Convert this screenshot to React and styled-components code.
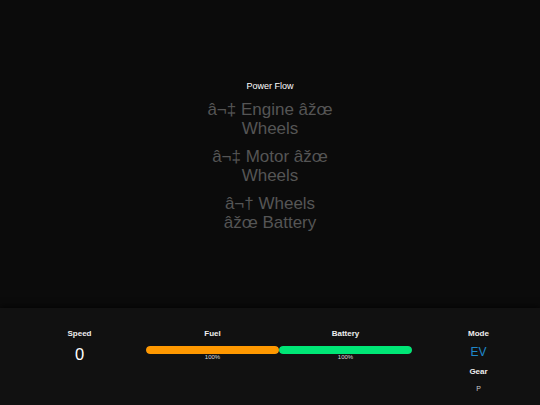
import React from 'react';
import styled, { createGlobalStyle } from 'styled-components';

const GlobalStyle = createGlobalStyle`
  html, body {
    margin: 0;
    padding: 0;
    background: #0b0b0b;
  }
  body {
    font-family: "Liberation Sans", Arial, sans-serif;
  }
`;

const Screen = styled.div`
  width: 540px;
  height: 405px;
  display: flex;
  flex-direction: column;
  background: #0b0b0b;
  color: #fff;
  overflow: hidden;
`;

const FlowArea = styled.div`
  flex: 1;
  display: flex;
  flex-direction: column;
  align-items: center;
  justify-content: center;
  padding-top: 4px;
`;

const FlowTitle = styled.div`
  font-size: 9px;
  color: #fff;
  margin-bottom: 9px;
`;

const FlowList = styled.div`
  width: 127px;
  display: flex;
  flex-direction: column;
  gap: 9px;
`;

const FlowItem = styled.div`
  font-size: 17px;
  color: #555;
  text-align: center;
  line-height: 19px;
`;

const Dashboard = styled.div`
  height: 97px;
  box-sizing: border-box;
  background: #111;
  box-shadow: 0 -2px 6px rgba(0, 0, 0, 0.6);
  padding: 20px 0 0 13px;
  display: grid;
  grid-template-columns: repeat(4, 133px);
  align-items: start;
`;

const Gauge = styled.div`
  display: flex;
  flex-direction: column;
  align-items: center;
`;

const Label = styled.div`
  font-size: 8px;
  font-weight: bold;
  line-height: 9px;
  color: #eee;
  margin-bottom: ${p => p.$gap || 8}px;
  margin-top: 0.5px;
`;

const Speed = styled.div`
  font-size: 16.5px;
  line-height: 19px;
  margin-top: -0.5px;
`;

const Track = styled.div`
  width: 100%;
  height: 8px;
  border-radius: 4px;
  background: #333;
  overflow: hidden;
  margin-top: 0.5px;
`;

const Fill = styled.div`
  height: 100%;
  border-radius: 4px;
  background: ${p => p.$color};
`;

const Percent = styled.div`
  font-size: 6px;
  line-height: 7px;
  color: #ddd;
`;

const Mode = styled.div`
  font-size: 12px;
  line-height: 14px;
  color: #1f88cc;
  margin-top: -0.5px;
  margin-bottom: 7.5px;
`;

const GearValue = styled.div`
  font-size: 7px;
  line-height: 8px;
  color: #ccc;
  margin-top: 0.5px;
`;

const levels = { fuel: 100, battery: 100 };

export default function App() {
  return (
    <Screen>
      <GlobalStyle />
      <FlowArea>
        <FlowTitle>Power Flow</FlowTitle>
        <FlowList>
          <FlowItem>â¬‡ Engine âžœ Wheels</FlowItem>
          <FlowItem>â¬‡ Motor âžœ Wheels</FlowItem>
          <FlowItem>â¬† Wheels âžœ Battery</FlowItem>
        </FlowList>
      </FlowArea>
      <Dashboard>
        <Gauge>
          <Label>Speed</Label>
          <Speed>0</Speed>
        </Gauge>
        <Gauge>
          <Label>Fuel</Label>
          <Track>
            <Fill $color="#ff9800" style={{ width: `${levels.fuel}%` }} />
          </Track>
          <Percent>{levels.fuel}%</Percent>
        </Gauge>
        <Gauge>
          <Label>Battery</Label>
          <Track>
            <Fill $color="#00e676" style={{ width: `${levels.battery}%` }} />
          </Track>
          <Percent>{levels.battery}%</Percent>
        </Gauge>
        <Gauge>
          <Label>Mode</Label>
          <Mode>EV</Mode>
          <Label $gap={8}>Gear</Label>
          <GearValue>P</GearValue>
        </Gauge>
      </Dashboard>
    </Screen>
  );
}
